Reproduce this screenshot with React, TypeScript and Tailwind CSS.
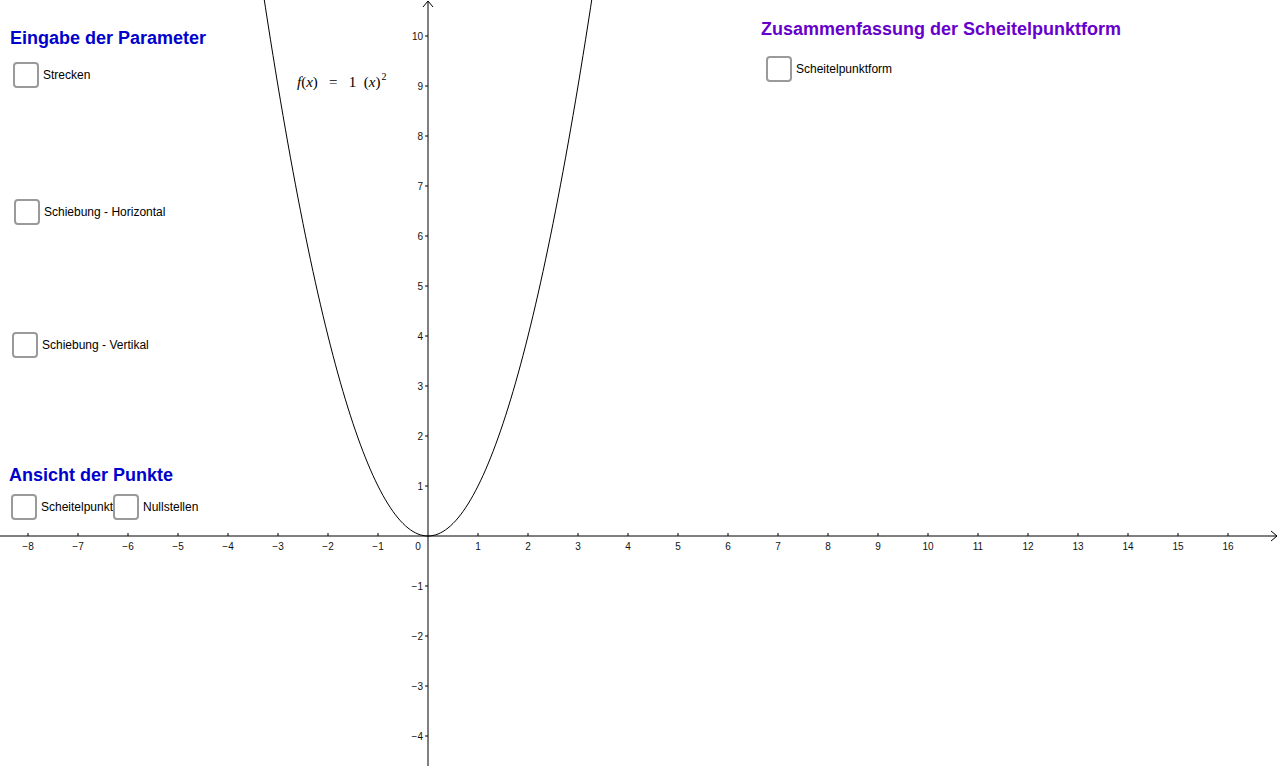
import React from 'react';

// GeoGebra-Ansicht: Parabel f(x) = x² mit Kontrollkästchen

const O = { x: 428, y: 536 };
const U = 50;

const xTicks = Array.from({ length: 25 }, (_, i) => i - 8).filter((n) => n !== 0);
const yTicks = Array.from({ length: 15 }, (_, i) => i - 4).filter((n) => n !== 0);

const fmt = (n: number) => (n < 0 ? `\u2212${-n}` : `${n}`);

const parabola = (() => {
  const pts: string[] = [];
  for (let x = -3.3; x <= 3.3001; x += 0.05) {
    pts.push(`${(O.x + U * x).toFixed(2)},${(O.y - U * x * x).toFixed(2)}`);
  }
  return 'M' + pts.join(' L');
})();

const tickFont = 'Liberation Sans, Arial, sans-serif';

/** Kontrollkästchen mit Beschriftung */
const Check: React.FC<{ label: string; className?: string }> = ({ label, className }) => (
  <div className={`flex items-center ${className ?? ''}`}>
    <div className="w-[26px] h-[26px] rounded-[4px] border-2 border-[#9a9a9a] bg-white shrink-0" />
    <span className="ml-[4px] text-[12px] text-black whitespace-nowrap">{label}</span>
  </div>
);

export default function App() {
  return (
    <div
      className="relative w-[1280px] h-[768px] bg-white overflow-hidden"
      style={{ fontFamily: '"Liberation Sans", Arial, sans-serif' }}
    >
      {/* Koordinatensystem */}
      <svg className="absolute inset-0" width={1280} height={768}>
        <line x1={0} y1={O.y} x2={1277} y2={O.y} stroke="#000" strokeWidth={1} />
        <path d={`M1271,${O.y - 5} L1277,${O.y} L1271,${O.y + 5}`} fill="none" stroke="#000" />
        <line x1={O.x} y1={766} x2={O.x} y2={1} stroke="#000" strokeWidth={1} />
        <path d={`M${O.x - 5},7 L${O.x},1 L${O.x + 5},7`} fill="none" stroke="#000" />

        {xTicks.map((n) => (
          <g key={`x${n}`}>
            <line x1={O.x + U * n} y1={O.y - 3} x2={O.x + U * n} y2={O.y} stroke="#000" />
            <text x={O.x + U * n} y={O.y + 14} fontSize={10} textAnchor="middle" fill="#111" fontFamily={tickFont}>
              {fmt(n)}
            </text>
          </g>
        ))}
        <text x={418} y={O.y + 14} fontSize={10} textAnchor="middle" fill="#111" fontFamily={tickFont}>
          0
        </text>

        {yTicks.map((n) => (
          <g key={`y${n}`}>
            <line x1={O.x - 3} y1={O.y - U * n} x2={O.x} y2={O.y - U * n} stroke="#000" />
            <text x={423} y={O.y - U * n + 3.5} fontSize={10} textAnchor="end" fill="#111" fontFamily={tickFont}>
              {fmt(n)}
            </text>
          </g>
        ))}

        <path d={parabola} fill="none" stroke="#000" strokeWidth={1} />
      </svg>

      {/* Funktionsterm */}
      <div
        className="absolute left-[297px] top-[75px] text-[15px] text-black whitespace-nowrap leading-none"
        style={{ fontFamily: '"Liberation Serif", "Times New Roman", serif' }}
      >
        <i>f</i>(<i>x</i>)&nbsp;&nbsp;&nbsp;=&nbsp;&nbsp;&nbsp;1&nbsp;&nbsp;(<i>x</i>)
        <span className="text-[10px] relative -top-[7px] ml-[1px]">2</span>
      </div>

      {/* Eingabe der Parameter / Ansicht der Punkte */}
      <div className="absolute left-[9px] top-[29px] flex flex-col">
        <h2 className="ml-[1px] text-[18px] font-bold leading-none text-[#0000cc]">Eingabe der Parameter</h2>
        <Check label="Strecken" className="ml-[4px] mt-[15px]" />
        <Check label="Schiebung - Horizontal" className="ml-[5px] mt-[111px]" />
        <Check label="Schiebung - Vertikal" className="ml-[3px] mt-[107px]" />
        <h2 className="mt-[108px] text-[18px] font-bold leading-none text-[#0000cc]">Ansicht der Punkte</h2>
        <div className="ml-[2px] mt-[10px] flex">
          <Check label="Scheitelpunkt" className="w-[102px]" />
          <Check label="Nullstellen" />
        </div>
      </div>

      {/* Zusammenfassung */}
      <div className="absolute left-[761px] top-[20px] flex flex-col">
        <h2 className="text-[18px] font-bold leading-none text-[#6600cc]">Zusammenfassung der Scheitelpunktform</h2>
        <Check label="Scheitelpunktform" className="ml-[5px] mt-[18px]" />
      </div>
    </div>
  );
}
